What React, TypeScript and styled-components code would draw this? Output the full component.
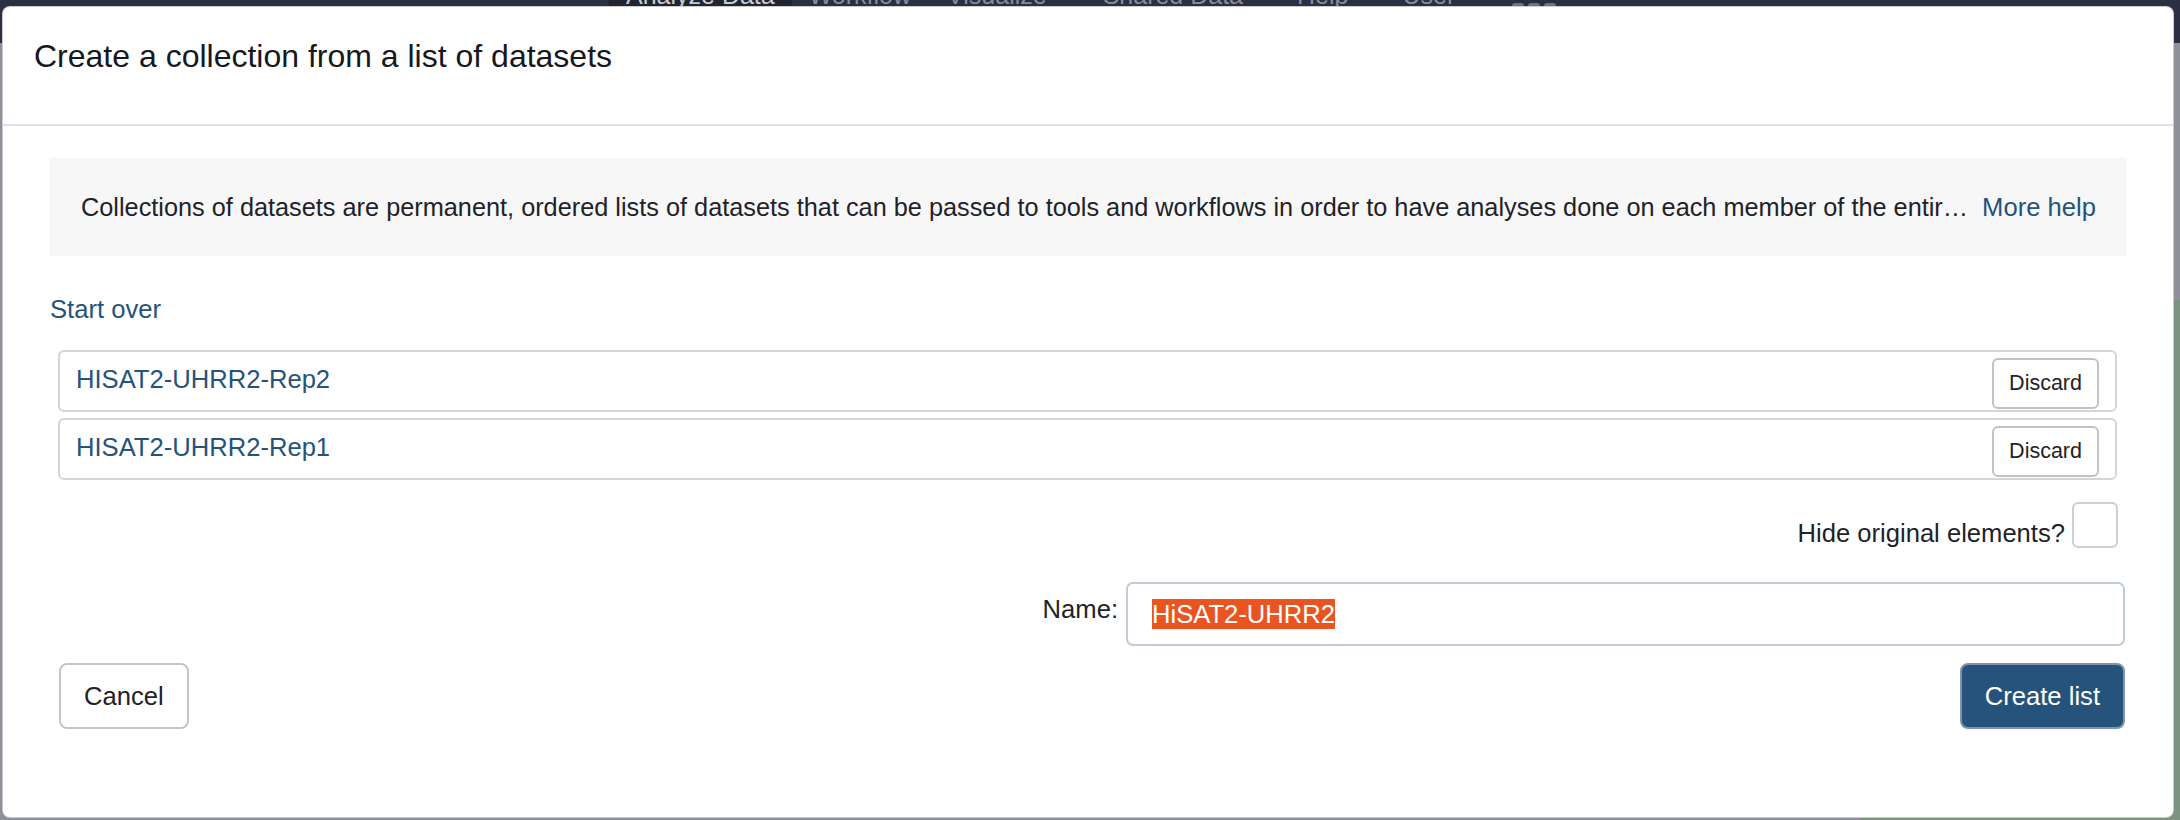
import React from "react";
import styled, { createGlobalStyle } from "styled-components";

const GlobalStyle = createGlobalStyle`
  html, body { margin: 0; padding: 0; }
  body {
    width: 2180px;
    height: 820px;
    overflow: hidden;
    background: #8e8f99;
    font-family: "Liberation Sans", Arial, Helvetica, sans-serif;
  }
  * { box-sizing: border-box; }
`;

const Page = styled.div`
  position: relative;
  width: 2180px;
  height: 820px;
  display: flex;
  flex-direction: column;
`;

const NavBar = styled.header`
  height: 43px;
  flex: none;
  background: #2b2f41;
  display: flex;
  align-items: flex-start;
  overflow: hidden;
  padding-left: 609px;
`;

const NavItem = styled.span<{ $active?: boolean; $ml?: number }>`
  height: 60px;
  margin-top: -17px;
  margin-left: ${(p) => p.$ml ?? 0}px;
  padding: 0 17px;
  font-size: 25px;
  line-height: 25px;
  white-space: nowrap;
  color: ${(p) => (p.$active ? "#c7cad2" : "#878b98")};
  background: ${(p) => (p.$active ? "#22252f" : "transparent")};
`;

const GridIcon = styled.svg`
  margin-left: 40px;
  margin-top: 3px;
  flex: none;
`;

const Content = styled.main`
  flex: 1;
  display: flex;
`;

const MainArea = styled.div`
  flex: 1;
  background: #8e8f99;
`;

const SidePanel = styled.aside`
  width: 320px;
  display: flex;
  flex-direction: column;
`;

const SideTop = styled.div`
  height: 257px;
  background: #8f909b;
`;

const SideBottom = styled.div`
  flex: 1;
  background: #7b9482;
`;

const Dialog = styled.section`
  position: absolute;
  left: 2px;
  top: 6px;
  width: 2172px;
  height: 812px;
  background: #fff;
  border: 1px solid rgba(0, 0, 0, 0.2);
  border-radius: 8px;
  display: flex;
  flex-direction: column;
  color: #1f2228;
  font-size: 25.6px;
  line-height: 38.4px;
`;

const Header = styled.div`
  height: 119px;
  padding: 30px 31px 0;
  border-bottom: 2px solid #dee2e6;
`;

const Title = styled.h4`
  margin: 0;
  font-size: 32px;
  font-weight: 400;
  line-height: 38.4px;
  color: #16181d;
`;

const Body = styled.div`
  padding: 32px 47px 0;
  display: flex;
  flex-direction: column;
`;

const InfoBox = styled.div`
  height: 98px;
  background: #f7f7f7;
  display: flex;
  align-items: center;
  padding: 0 30px 0 31px;
  white-space: nowrap;
`;

const HelpText = styled.span`
  overflow: hidden;
  text-overflow: ellipsis;
  min-width: 0;
  font-size: 25.3px;
`;

const Link = styled.a`
  color: #25537b;
  text-decoration: none;
  cursor: pointer;
`;

const MoreHelp = styled(Link)`
  margin-left: 14px;
  flex: none;
`;

const StartOver = styled(Link)`
  display: block;
  margin-top: 34px;
  align-self: flex-start;
`;

const ElementList = styled.div`
  margin: 22px 9px 0 8px;
  display: flex;
  flex-direction: column;
  gap: 6px;
`;

const ElementRow = styled.div`
  height: 62px;
  border: 2px solid #d5d5d5;
  border-radius: 6px;
  padding: 6px 16px 0 16px;
  display: flex;
  justify-content: space-between;
  align-items: flex-start;
`;

const ElementName = styled(Link)`
  margin-top: 2px;
`;

const SmallButton = styled.button`
  height: 51px;
  padding: 0 15px;
  font-family: inherit;
  font-size: 21.5px;
  color: #1f2228;
  background: #fff;
  border: 2px solid #c2c2c2;
  border-radius: 6px;
  cursor: pointer;
`;

const HideRow = styled.label`
  margin: 22px 8px 0 0;
  display: flex;
  justify-content: flex-end;
  align-items: flex-end;
  gap: 7px;
`;

const HideText = styled.span`
  line-height: 30px;
`;

const CheckBox = styled.span`
  width: 46px;
  height: 46px;
  border: 2px solid #c9d0d8;
  border-radius: 6px;
  background: #fff;
`;

const NameRow = styled.div`
  margin: 34px 1px 0 0;
  display: flex;
  justify-content: flex-end;
  align-items: flex-start;
  gap: 8px;
`;

const NameLabel = styled.span`
  padding-top: 8px;
`;

const NameInput = styled.div`
  width: 999px;
  height: 64px;
  border: 2px solid #c1cbd6;
  border-radius: 7px;
  padding-left: 24px;
  display: flex;
  align-items: center;
`;

const Selected = styled.span`
  background: #e95420;
  color: #fff;
  line-height: 30px;
`;

const Footer = styled.div`
  margin: 17px 1px 0 9px;
  display: flex;
  justify-content: space-between;
`;

const Button = styled.button<{ $primary?: boolean }>`
  height: 66px;
  padding: 0 23px;
  font-family: inherit;
  font-size: 25.6px;
  border-radius: 8px;
  border: 2px solid ${(p) => (p.$primary ? "#8294a8" : "#c6c6c6")};
  background: ${(p) => (p.$primary ? "#25537b" : "#fff")};
  color: ${(p) => (p.$primary ? "#fff" : "#1f2228")};
  cursor: pointer;
`;

const elements = ["HISAT2-UHRR2-Rep2", "HISAT2-UHRR2-Rep1"];

export default function App() {
  return (
    <>
      <GlobalStyle />
      <Page>
        <NavBar>
          <NavItem $active>Analyze Data</NavItem>
          <NavItem>Workflow</NavItem>
          <NavItem $ml={2}>Visualize</NavItem>
          <NavItem $ml={22}>Shared Data</NavItem>
          <NavItem $ml={20}>Help</NavItem>
          <NavItem $ml={20}>User</NavItem>
          <GridIcon width="44" height="40" viewBox="0 0 44 40">
            <rect x="0" y="0" width="12" height="10" rx="3" fill="#6f7381" />
            <rect x="16" y="0" width="12" height="10" rx="3" fill="#6f7381" />
            <rect x="32" y="0" width="12" height="10" rx="3" fill="#6f7381" />
          </GridIcon>
        </NavBar>
        <Content>
          <MainArea />
          <SidePanel>
            <SideTop />
            <SideBottom />
          </SidePanel>
        </Content>

        <Dialog role="dialog" aria-modal="true">
          <Header>
            <Title>Create a collection from a list of datasets</Title>
          </Header>
          <Body>
            <InfoBox>
              <HelpText>
                Collections of datasets are permanent, ordered lists of datasets that can be passed to tools and
                workflows in order to have analyses done on each member of the entir…
              </HelpText>
              <MoreHelp>More help</MoreHelp>
            </InfoBox>
            <StartOver>Start over</StartOver>
            <ElementList>
              {elements.map((name) => (
                <ElementRow key={name}>
                  <ElementName>{name}</ElementName>
                  <SmallButton>Discard</SmallButton>
                </ElementRow>
              ))}
            </ElementList>
            <HideRow>
              <HideText>Hide original elements?</HideText>
              <CheckBox />
            </HideRow>
            <NameRow>
              <NameLabel>Name:</NameLabel>
              <NameInput>
                <Selected>HiSAT2-UHRR2</Selected>
              </NameInput>
            </NameRow>
            <Footer>
              <Button>Cancel</Button>
              <Button $primary>Create list</Button>
            </Footer>
          </Body>
        </Dialog>
      </Page>
    </>
  );
}
